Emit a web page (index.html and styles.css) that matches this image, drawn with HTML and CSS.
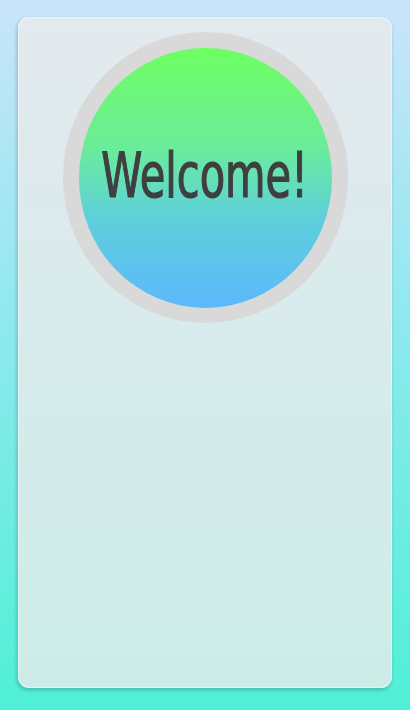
FILE: index.html
```html
<!DOCTYPE html>
<html>
<head>
<meta charset="utf-8">
<link rel="stylesheet" href="styles.css">
</head>
<body>
<div class="page">
  <div class="card">
    <div class="ring">
      <div class="orb">
        <h1 class="title">Welcome!</h1>
      </div>
    </div>
  </div>
</div>
</body>
</html>
```
FILE: styles.css
```css
html, body {
  margin: 0;
  padding: 0;
}
body {
  width: 410px;
  height: 710px;
  overflow: hidden;
  background: linear-gradient(180deg, #c9e4fb 0%, #8fe9ef 45%, #4ff0d6 100%);
}
.page {
  padding: 17px 18px 22px 18px;
  height: 710px;
  box-sizing: border-box;
}
.card {
  height: 671px;
  box-sizing: border-box;
  border-radius: 11px;
  background: rgba(235, 235, 235, 0.8);
  border: 1px solid rgba(255, 255, 255, 0.45);
  box-shadow: -1px 2px 4px rgba(0, 0, 0, 0.22);
  display: flex;
  flex-direction: column;
  align-items: center;
  padding-top: 14px;
}
.ring {
  width: 285px;
  height: 291px;
  box-sizing: border-box;
  border-radius: 50%;
  background: #d9d9d9;
  display: flex;
  align-items: center;
  justify-content: center;
}
.orb {
  width: 253px;
  height: 260px;
  border-radius: 50%;
  background: linear-gradient(180deg, #6eff62 0%, #6bec9a 38%, #5ecfdc 66%, #5cb9fb 100%);
  display: flex;
  align-items: center;
  justify-content: center;
}
.title {
  margin: 0 0 4px 0;
  font-family: "DejaVu Sans Condensed", "DejaVu Sans", sans-serif;
  font-weight: normal;
  font-size: 62px;
  line-height: 1;
  color: #3f3f3f;
  -webkit-text-stroke: 1.2px #3f3f3f;
  transform: scaleX(0.745);
  white-space: nowrap;
}
```
